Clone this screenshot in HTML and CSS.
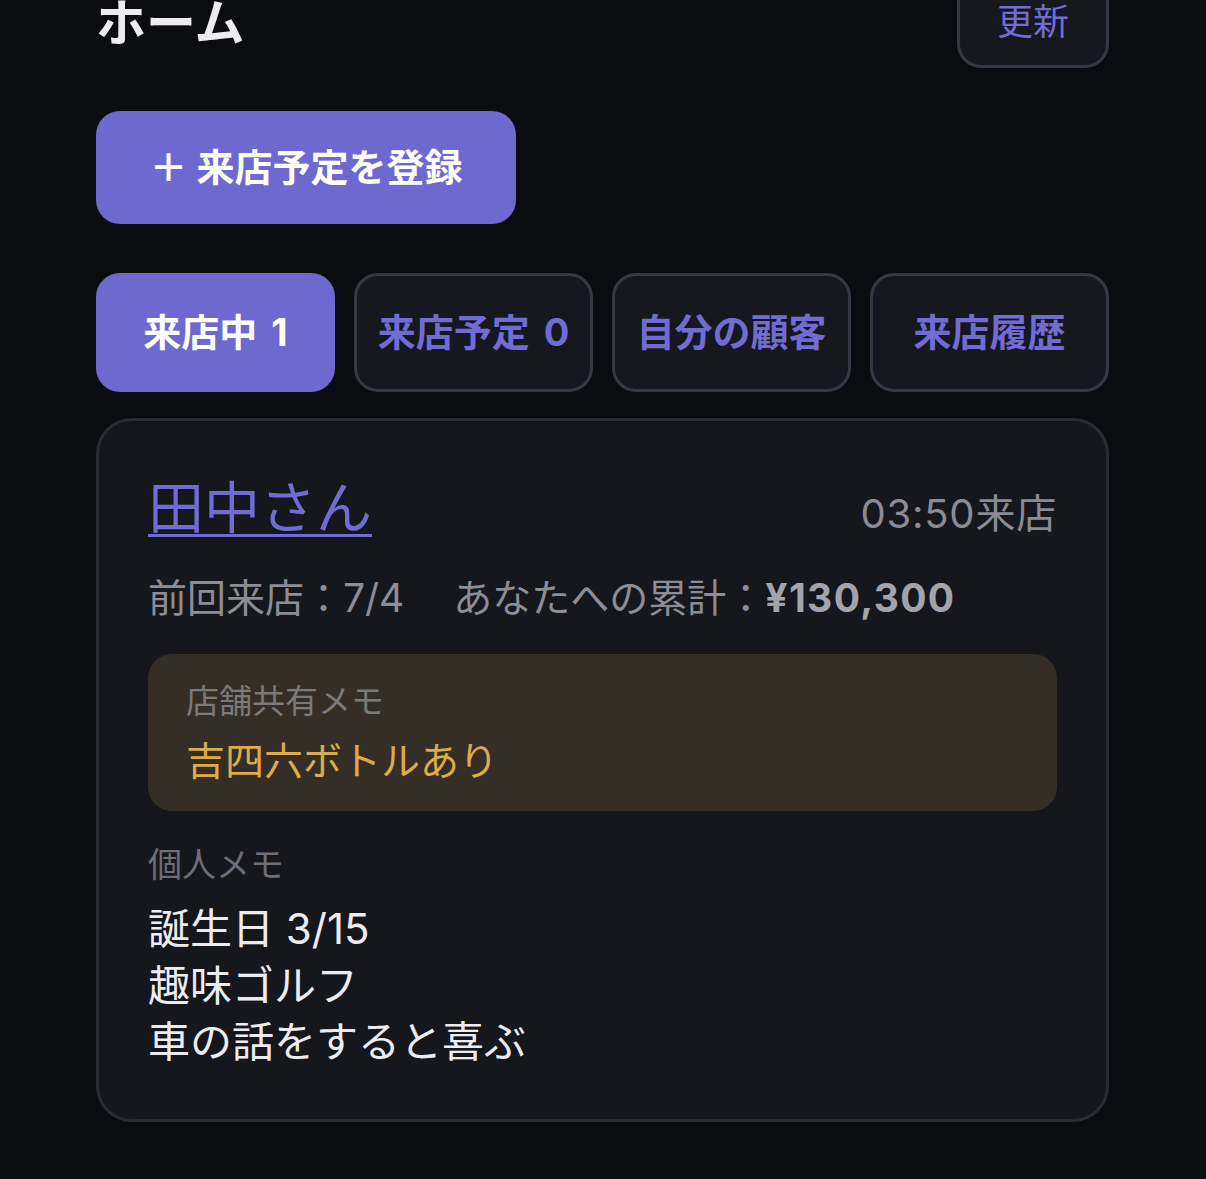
FILE: index.html
```html
<!DOCTYPE html>
<html lang="ja">
<head>
<meta charset="utf-8">
<title>ホーム</title>
<link rel="stylesheet" href="styles.css">
</head>
<body>
<main class="page">
  <header class="header">
    <h1 class="title">ホーム</h1>
    <button class="refresh">更新</button>
  </header>
  <button class="primary">＋ 来店予定を登録</button>
  <nav class="tabs">
    <button class="tab active">来店中 1</button>
    <button class="tab">来店予定 0</button>
    <button class="tab">自分の顧客</button>
    <button class="tab">来店履歴</button>
  </nav>
  <section class="card">
    <div class="card-head">
      <a class="name" href="#">田中さん</a>
      <span class="time">03:50来店</span>
    </div>
    <div class="meta">
      <span>前回来店：7/4</span>
      <span class="total">あなたへの累計：<b>¥130,300</b></span>
    </div>
    <div class="shared">
      <div class="shared-label">店舗共有メモ</div>
      <div class="shared-text">吉四六ボトルあり</div>
    </div>
    <div class="memo-label">個人メモ</div>
    <div class="memo">
      <div>誕生日 3/15</div>
      <div>趣味ゴルフ</div>
      <div>車の話をすると喜ぶ</div>
    </div>
  </section>
</main>
</body>
</html>
```

FILE: styles.css
```css
* { box-sizing: border-box; }
html, body {
  margin: 0;
  background: #0b0c10;
}
body {
  font-family: Inter, "Noto Sans CJK JP", sans-serif;
  color: #ececf0;
}
.page {
  padding: 0 97px 0 96px;
  margin-top: -23px;
}
.header {
  display: flex;
  justify-content: space-between;
  align-items: center;
}
.title {
  margin: 0;
  font-size: 50px;
  font-weight: 700;
  line-height: 64px;
  color: #ececf0;
}
.refresh {
  font-family: inherit;
  font-size: 36px;
  line-height: 52px;
  padding: 16px 37px 17px;
  background: #17181f;
  color: #716cd4;
  border: 3px solid #383844;
  border-radius: 24px;
}
.primary {
  display: block;
  margin-top: 43px;
  font-family: inherit;
  font-size: 38px;
  font-weight: 700;
  line-height: 52px;
  padding: 30px 0 31px;
  background: #6e69cf;
  color: #fff;
  border: 0;
  border-radius: 24px;
  width: 420px;
  text-align: center;
}
.tabs {
  margin-top: 49px;
  display: grid;
  grid-template-columns: repeat(4, 1fr);
  gap: 19px;
}
.tab {
  font-family: inherit;
  font-size: 38px;
  font-weight: 700;
  line-height: 52px;
  word-spacing: 5px;
  padding: 30px 0 31px;
  background: #17181f;
  color: #716cd4;
  border: 3px solid #383844;
  border-radius: 24px;
  white-space: nowrap;
}
.tab.active {
  background: #6e69cf;
  border-color: #6e69cf;
  color: #fff;
}
.card {
  margin-top: 26px;
  background: #16171d;
  border: 3px solid #2a2b33;
  border-radius: 36px;
  padding: 48px 49px 48px 49px;
}
.card-head {
  display: flex;
  justify-content: space-between;
  align-items: baseline;
}
.name {
  font-size: 56px;
  line-height: 78px;
  color: #716cd4;
  text-decoration: underline;
  text-decoration-thickness: 3px;
  text-underline-offset: 6px;
}
.time {
  font-size: 40px;
  letter-spacing: 0.02em;
  color: #8a8b94;
}
.meta {
  margin-top: 22px;
  font-size: 39px;
  line-height: 57px;
  color: #8c8d96;
}
.total { margin-left: 38px; }
.total b {
  font-weight: 700;
  letter-spacing: 0.035em;
  color: #a2a3ab;
}
.shared {
  margin-top: 28px;
  background: #342e27;
  border-radius: 24px;
  padding: 24px 38px 22px;
}
.shared-label {
  font-size: 33px;
  line-height: 46px;
  color: #7b7a7b;
}
.shared-text {
  margin-top: 8px;
  font-size: 39px;
  line-height: 57px;
  color: #dcab4c;
}
.memo-label {
  margin-top: 31px;
  font-size: 34px;
  line-height: 46px;
  color: #6d6e76;
}
.memo {
  margin-top: 13px;
  font-size: 42px;
  line-height: 56.5px;
  color: #ececf0;
}
```
